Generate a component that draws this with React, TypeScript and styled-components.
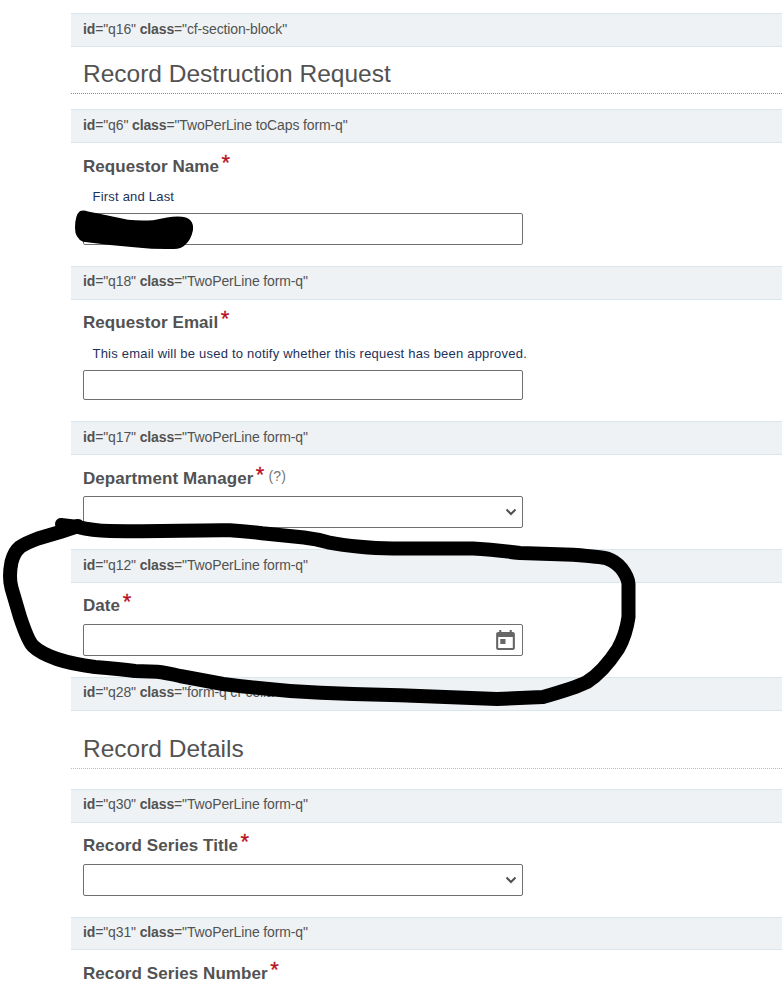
import React from "react";
import styled, { createGlobalStyle } from "styled-components";

const GlobalStyle = createGlobalStyle`
  * { box-sizing: border-box; }
  html, body { margin: 0; padding: 0; background: #fff; overflow: hidden; }
`;

const Page = styled.main`
  position: relative;
  width: 782px;
  height: 992px;
  padding: 13px 0 0 71px;
  overflow: hidden;
  background: #fff;
  color: #525252;
  font-family: "Liberation Sans", Arial, sans-serif;
`;

const Block = styled.section<{ $height: number }>`
  display: flex;
  flex-direction: column;
  height: ${(p) => p.$height}px;
`;

const TagBar = styled.div<{ $height?: number; $line?: number }>`
  flex: none;
  height: ${(p) => p.$height ?? 34}px;
  padding-left: 12px;
  border: solid #dae6ed;
  border-width: 1px 0;
  background: #eef2f5;
  font-size: 14px;
  line-height: ${(p) => p.$line ?? 30}px;
  letter-spacing: -0.13px;
  white-space: nowrap;
`;

const Heading = styled.h2<{ $top: number; $line: string }>`
  margin: 0;
  padding: ${(p) => p.$top}px 0 4px 12px;
  border-bottom: 1px dotted ${(p) => p.$line};
  font-size: 24.5px;
  font-weight: 400;
  line-height: 30px;
`;

const Label = styled.label<{ $top: number }>`
  display: flex;
  flex: none;
  height: 41px;
  padding: ${(p) => p.$top}px 0 0 12px;
  font-size: 17px;
  font-weight: 700;
  line-height: 20px;
  letter-spacing: 0.07px;
  white-space: nowrap;
`;

const Star = styled.span`
  margin: -6px 0 0 2.5px;
  color: #b80f1c;
  font-size: 22px;
  font-weight: 400;
  line-height: 23px;
  letter-spacing: 0;
  -webkit-text-stroke: 0.3px #b80f1c;
`;

const Help = styled.span`
  margin: -3px 0 0 4px;
  color: #777;
  font-size: 14px;
  font-weight: 400;
  letter-spacing: 0.2px;
`;

const Hint = styled.p`
  flex: none;
  height: 29px;
  margin: 0;
  padding: 4px 0 0 21.5px;
  color: #1c3159;
  font-size: 13px;
  line-height: 18px;
  letter-spacing: 0.21px;
  white-space: nowrap;
`;

const Field = styled.div<{ $height: number }>`
  display: grid;
  flex: none;
  align-items: center;
  width: 440px;
  height: ${(p) => p.$height}px;
  margin-left: 12px;
  > * { grid-area: 1 / 1; }
  > svg { justify-self: end; pointer-events: none; }
`;

const Input = styled.input`
  width: 100%;
  height: 100%;
  padding: 4px 8px;
  border: 1px solid #6f6f6f;
  border-radius: 2px;
  background: #fff;
  font: inherit;
`;

const Select = styled(Input).attrs({ as: "select" })`
  appearance: none;
`;

const Chevron = styled.svg`
  margin-right: 6px;
`;

const CalendarIcon = styled.svg`
  margin: 1px 5px 0 0;
`;

const Marker = styled.svg`
  position: absolute;
  inset: 0;
  pointer-events: none;
`;

type Kind = "text" | "select" | "date" | "none";

interface Question {
  id: string;
  height: number;
  label: string;
  labelTop?: number;
  tagLine?: number;
  classes?: string;
  hint?: string;
  help?: boolean;
  kind: Kind;
  fieldHeight?: number;
  barHeight?: number;
}

const requestor: Question[] = [
  { id: "q6", height: 157, label: "Requestor Name", labelTop: 14, classes: "TwoPerLine toCaps form-q", hint: "First and Last", kind: "text" },
  { id: "q18", height: 155, label: "Requestor Email", tagLine: 28, hint: "This email will be used to notify whether this request has been approved.", kind: "text", fieldHeight: 30 },
  { id: "q17", height: 128, label: "Department Manager", labelTop: 14, help: true, kind: "select" },
  { id: "q12", height: 128, label: "Date", kind: "date" },
];

const details: Question[] = [
  { id: "q30", height: 128, label: "Record Series Title", tagLine: 28, kind: "select" },
  { id: "q31", height: 75, label: "Record Series Number", labelTop: 14, tagLine: 28, kind: "none", barHeight: 33 },
];

function Tag({ id, classes, height, line }: { id: string; classes: string; height?: number; line?: number }) {
  return (
    <TagBar $height={height} $line={line}>
      <b>id</b>="{id}" <b>class</b>="{classes}"
    </TagBar>
  );
}

function Control({ id, kind, height }: { id: string; kind: Kind; height: number }) {
  if (kind === "none") return null;
  return (
    <Field $height={height}>
      {kind === "select" ? <Select id={id} /> : <Input id={id} type="text" />}
      {kind === "select" && (
        <Chevron width="12" height="10" viewBox="0 0 12 10">
          <path d="M1.5 2.5 6 7 10.5 2.5" fill="none" stroke="#505050" strokeWidth="2" />
        </Chevron>
      )}
      {kind === "date" && (
        <CalendarIcon width="25" height="24" viewBox="0 0 24 24" preserveAspectRatio="none" fill="#666">
          <path d="M19 3h-1V1h-2v2H8V1H6v2H5c-1.11 0-1.99.9-1.99 2L3 19c0 1.1.89 2 2 2h14c1.1 0 2-.9 2-2V5c0-1.1-.9-2-2-2zm0 16H5V8h14v11zM7 10h5v5H7z" />
        </CalendarIcon>
      )}
    </Field>
  );
}

function QuestionBlock({ q }: { q: Question }) {
  return (
    <Block $height={q.height}>
      <Tag id={q.id} classes={q.classes ?? "TwoPerLine form-q"} height={q.barHeight} line={q.tagLine} />
      <Label htmlFor={q.id} $top={q.labelTop ?? 13}>
        {q.label}
        <Star>*</Star>
        {q.help && <Help>(?)</Help>}
      </Label>
      {q.hint && <Hint>{q.hint}</Hint>}
      <Control id={q.id} kind={q.kind} height={q.fieldHeight ?? 32} />
    </Block>
  );
}

export default function App() {
  return (
    <>
      <GlobalStyle />
      <Page>
        <Block $height={96}>
          <Tag id="q16" classes="cf-section-block" />
          <Heading $top={12} $line="#8c8c8c">Record Destruction Request</Heading>
        </Block>
        {requestor.map((q) => <QuestionBlock key={q.id} q={q} />)}
        <Block $height={112}>
          <Tag id="q28" classes="form-q cf-colla" line={28} />
          <Heading $top={23} $line="#bcbcbc">Record Details</Heading>
        </Block>
        {details.map((q) => <QuestionBlock key={q.id} q={q} />)}
        <Marker width="782" height="992" viewBox="0 0 782 992">
          <path d="M80 211Q84 210 88 211.5L103 214.5 128 219.8Q140 221 153 220.2L167 217.5Q176 216 182 216.8Q194 218 193 230Q191 240 185 245Q181 249 174 249Q155 249.5 137 247.5L110 245 83 241.8Q75 238 75 228Q75 215 80 211Z" />
          <g fill="none" stroke="#000" strokeLinecap="round" strokeLinejoin="round">
            <path strokeWidth="12" d="M61 524L78 526" />
            <path strokeWidth="14" d="M78 527Q92 530.5 110 531Q150 531.5 180 530.8Q210 530 230 530.2Q245 531 262 533.3L304 537.5Q316 539 328 542.3Q342 545 360 546.7Q375 548.3 393 548.4L473 548.5Q494 549.8 520 553L573 554.7Q603 557 607 558.5Q615 561 621.5 568.5Q628 577 628.5 584V617Q626 635 618 649Q603 672 587 682Q575 688 543 697L497 699 400 695.3 353 694Q320 693 290 691Q255 688 223 684L180 676Q165 672.5 157 671.7L135 671Q120 669 95 667Q72 664 57 659Q40 653 33 646Q28 641 20 617L11.5 588Q8.5 577 11.5 562Q14 552 20 547Q26 543 38 538.5L60 532 78 526" />
          </g>
        </Marker>
      </Page>
    </>
  );
}
